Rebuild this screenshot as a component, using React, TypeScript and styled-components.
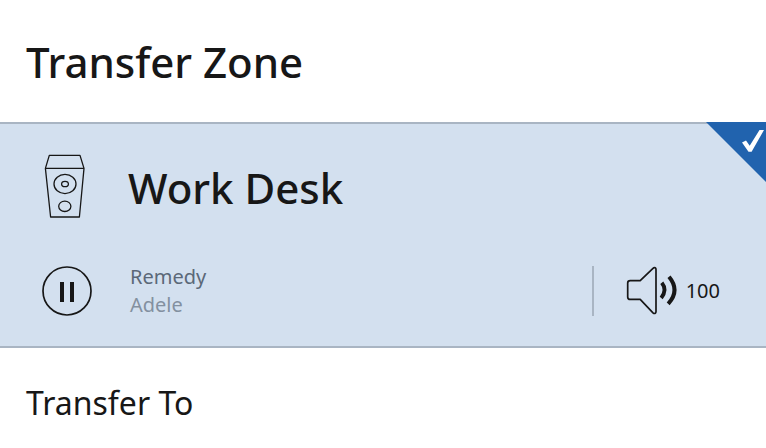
import React, { useState } from 'react';
import styled, { createGlobalStyle } from 'styled-components';

const ink = '#171717';
const line = '#a9b5c3';

const GlobalStyle = createGlobalStyle`
  * { box-sizing: border-box; }
  body {
    margin: 0;
    background: #ffffff;
    color: ${ink};
    font-family: 'Noto Sans', 'Open Sans', sans-serif;
  }
`;

const Header = styled.header`
  padding: 32px 26px 30px;
`;

const Title = styled.h1`
  margin: 0;
  font-size: 42px;
  line-height: 60px;
  font-weight: 500;
`;

const Zone = styled.section`
  position: relative;
  display: flex;
  flex-direction: column;
  gap: 39px;
  padding: 28px 46px 27px 26px;
  background: #d3e0ef;
  border-top: 2px solid ${line};
  border-bottom: 2px solid ${line};
`;

const Row = styled.div`
  display: grid;
  grid-template-columns: 82px 1fr auto;
  align-items: center;
  column-gap: 20px;
`;

const IconCell = styled.div`
  display: flex;
  justify-content: center;
`;

const ZoneName = styled.h2`
  margin: 0;
  font-size: 42px;
  line-height: 72px;
  font-weight: 500;
`;

const IconButton = styled.button<{ $round?: boolean }>`
  display: flex;
  padding: 0;
  border: 0;
  border-radius: ${({ $round }) => ($round ? '50%' : '0')};
  background: none;
  color: inherit;
  cursor: pointer;
`;

const Track = styled.div`
  padding-left: 2px;
  font-size: 20px;
  line-height: 28px;
`;

const Song = styled.div`
  color: #5b6878;
`;

const Artist = styled.div`
  color: #8390a0;
`;

const Volume = styled.div`
  display: flex;
  align-items: center;
  gap: 8px;
  padding-left: 32px;
  border-left: 2px solid ${line};
  font-size: 20px;
  line-height: 28px;
`;

const Corner = styled.div`
  position: absolute;
  top: -2px;
  right: 0;
  display: flex;
`;

const Footer = styled.section`
  padding: 33px 26px 22px;
`;

const Subtitle = styled.h2`
  margin: 0;
  font-size: 32px;
  line-height: 44px;
  font-weight: 400;
`;

const SpeakerIcon = () => (
  <svg width="46" height="68" viewBox="0 0 46 68" fill="none" stroke={ink} strokeWidth="1.3" strokeLinejoin="round" aria-hidden="true">
    <path d="M1.4 14.4 5.3 1.4H36L40 14.4 35.4 63H6.6Z" />
    <path d="M1.4 14.4H40" />
    <ellipse cx="21" cy="30" rx="11" ry="9.6" />
    <ellipse cx="21" cy="30" rx="3.4" ry="2.7" />
    <ellipse cx="20.8" cy="52.3" rx="6.1" ry="5.2" />
  </svg>
);

const PauseIcon = ({ playing }: { playing: boolean }) => (
  <svg width="50" height="50" viewBox="0 0 50 50" fill="none" aria-hidden="true">
    <circle cx="25" cy="25" r="24" stroke={ink} strokeWidth="1.7" />
    {playing ? (
      <path d="M18 16h4v20h-4zM28 16h4v20h-4z" fill={ink} />
    ) : (
      <path d="M19 15 36 25 19 35Z" fill={ink} />
    )}
  </svg>
);

const VolumeIcon = () => (
  <svg width="52" height="50" viewBox="0 0 52 50" fill="none" stroke={ink} aria-hidden="true">
    <path
      d="M4.2 14.6H14.2L27 2.3Q28.2 1.1 29.3 1.8 30 2.2 30 3.4V45.6Q30 46.9 29.3 47.3 28.2 47.9 27 46.8L14.2 33.4H4.2Q1.7 33.4 1.7 31V17Q1.7 14.6 4.2 14.6Z"
      strokeWidth="1.7"
      strokeLinejoin="round"
    />
    <path d="M35.8 16.8Q41.6 24 35.2 32" strokeWidth="3.8" />
    <path d="M43 10.8Q54.4 24.5 42.2 37.8" strokeWidth="4" />
  </svg>
);

const CornerMark = () => (
  <svg width="60" height="60" viewBox="0 0 60 60" role="img" aria-label="Selected">
    <path d="M0 0H60V60Z" fill="#2163ae" />
    <path d="M36 20.5 40 18.5 43.7 23.8 53.5 8H58L45.6 29.8H42.5Z" fill="#ffffff" />
  </svg>
);

export default function App() {
  const [playing, setPlaying] = useState(true);
  return (
    <>
      <GlobalStyle />
      <main>
        <Header>
          <Title>Transfer Zone</Title>
        </Header>
        <Zone>
          <Row>
            <IconCell><SpeakerIcon /></IconCell>
            <ZoneName>Work Desk</ZoneName>
          </Row>
          <Row>
            <IconCell>
              <IconButton $round type="button" aria-label={playing ? 'Pause' : 'Play'} onClick={() => setPlaying(!playing)}>
                <PauseIcon playing={playing} />
              </IconButton>
            </IconCell>
            <Track>
              <Song>Remedy</Song>
              <Artist>Adele</Artist>
            </Track>
            <Volume>
              <IconButton type="button" aria-label="Volume">
                <VolumeIcon />
              </IconButton>
              <span>100</span>
            </Volume>
          </Row>
          <Corner><CornerMark /></Corner>
        </Zone>
        <Footer>
          <Subtitle>Transfer To</Subtitle>
        </Footer>
      </main>
    </>
  );
}
